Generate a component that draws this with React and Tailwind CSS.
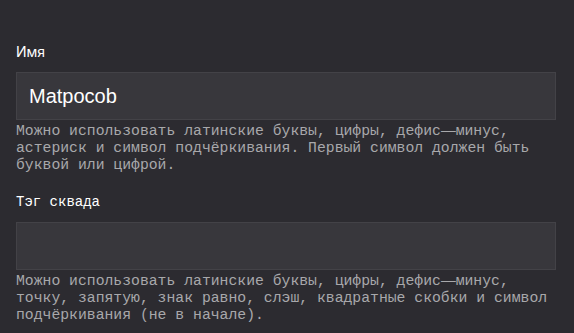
import React from 'react'

const Dash = () => <span className='font-["Liberation_Sans",sans-serif]'>—</span>

const Field = ({ label, labelClass, value, children }) => (
  <div className='flex flex-col'>
    <label className={`text-[14px] leading-5 text-white ${labelClass}`}>{label}</label>
    <div className='mt-[10px] h-[48px] w-[540px] border border-[#434247] bg-[#38373c] px-3 flex items-center'>
      <span className='text-[20px] text-white font-["Liberation_Sans",Arial,sans-serif]'>{value}</span>
    </div>
    <p className='mt-[2px] font-["Liberation_Mono",monospace] text-[14.75px] leading-[17px] text-[#a8a8ab]'>
      {children}
    </p>
  </div>
)

export default function App() {
  return (
    <div className='min-h-[333px] w-[574px] bg-[#2c2b30] pl-4 pt-[42px] flex flex-col gap-[18px]'>
      <Field label='Имя' labelClass='font-["Inter",sans-serif]' value='Matpocob'>
        Можно использовать латинские буквы, цифры, дефис<Dash />минус,
        <br />
        астериск и символ подчёркивания. Первый символ должен быть
        <br />
        буквой или цифрой.
      </Field>
      <Field label='Тэг сквада' labelClass='font-["Liberation_Mono",monospace]' value=''>
        Можно использовать латинские буквы, цифры, дефис<Dash />минус,
        <br />
        точку, запятую, знак равно, слэш, квадратные скобки и символ
        <br />
        подчёркивания (не в начале).
      </Field>
    </div>
  )
}
